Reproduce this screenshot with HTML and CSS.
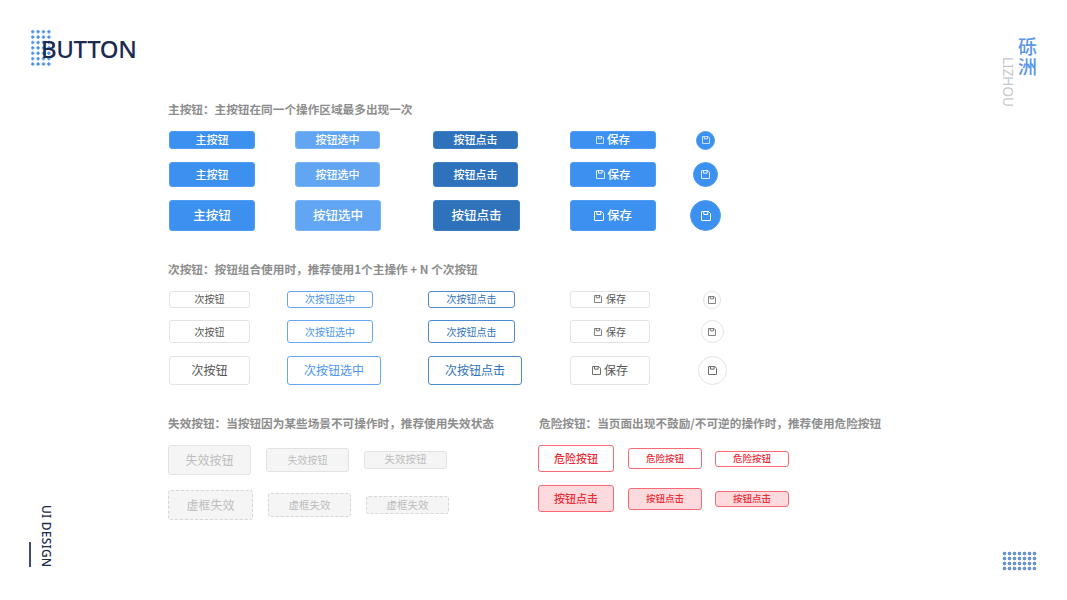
FILE: index.html
```html
<!DOCTYPE html>
<html lang="zh-CN">
<head>
<meta charset="utf-8">
<title>BUTTON</title>
<link rel="stylesheet" href="styles.css">
</head>
<body>
<svg class="defs" width="0" height="0" aria-hidden="true"><symbol id="save" viewBox="1 1 10 10"><path d="M2 1.5h6.5l2 2V10a.5.5 0 0 1-.5.5H2a.5.5 0 0 1-.5-.5V2a.5.5 0 0 1 .5-.5z" fill="none" stroke="currentColor" stroke-width="1"/><path d="M3.8 1.5v3h4v-3" fill="none" stroke="currentColor" stroke-width="1"/></symbol></svg>
<div class="page">
  <aside class="rail-left">
    <div class="logo"><span class="logo-dots"></span><span class="logo-text">BUTTON</span></div>
    <div class="tag"><span class="tag-line"></span><span class="tag-text">UI DESIGN</span></div>
  </aside>
  <main class="main">
    <h2 class="title">主按钮：主按钮在同一个操作区域最多出现一次</h2>
    <div class="grid grid-primary">
      <button class="btn pri h18 w86 f11">主按钮</button>
      <button class="btn sel h18 w85 f11">按钮选中</button>
      <button class="btn clk h18 w85 f11">按钮点击</button>
      <button class="btn pri h18 w86 f115 g3"><svg class="i8"><use href="#save"/></svg>保存</button>
      <span class="cell"><button class="btn pri round c19"><svg class="i8"><use href="#save"/></svg></button></span>

      <button class="btn pri h25 w86 f11">主按钮</button>
      <button class="btn sel h25 w85 f11">按钮选中</button>
      <button class="btn clk h25 w85 f11">按钮点击</button>
      <button class="btn pri h25 w86 f115 g3"><svg class="i9"><use href="#save"/></svg>保存</button>
      <span class="cell"><button class="btn pri round c25"><svg class="i9"><use href="#save"/></svg></button></span>

      <button class="btn pri h31 w86 f125">主按钮</button>
      <button class="btn sel h31 w86 f125">按钮选中</button>
      <button class="btn clk h31 w87 f125">按钮点击</button>
      <button class="btn pri h31 w86 f125 g3"><svg class="i10"><use href="#save"/></svg>保存</button>
      <span class="cell"><button class="btn pri round c31"><svg class="i10"><use href="#save"/></svg></button></span>
    </div>

    <h2 class="title">次按钮：按钮组合使用时，推荐使用1个主操作 + N 个次按钮</h2>
    <div class="grid grid-secondary">
      <button class="btn ghost h17 w81 f10">次按钮</button>
      <button class="btn osel h17 w86 f10">次按钮选中</button>
      <button class="btn oclk h17 w87 f10">次按钮点击</button>
      <button class="btn ghost h17 w80 f10 g4"><svg class="i8"><use href="#save"/></svg>保存</button>
      <span class="cell"><button class="btn ghost round c18"><svg class="i8"><use href="#save"/></svg></button></span>

      <button class="btn ghost h23 w81 f10">次按钮</button>
      <button class="btn osel h23 w86 f10">次按钮选中</button>
      <button class="btn oclk h23 w87 f10">次按钮点击</button>
      <button class="btn ghost h23 w80 f10 g4"><svg class="i8"><use href="#save"/></svg>保存</button>
      <span class="cell"><button class="btn ghost round c23"><svg class="i8"><use href="#save"/></svg></button></span>

      <button class="btn ghost h29 w81 f12">次按钮</button>
      <button class="btn osel h29 w94 f12">次按钮选中</button>
      <button class="btn oclk h29 w94 f12">次按钮点击</button>
      <button class="btn ghost h29 w80 f12 g3"><svg class="i9"><use href="#save"/></svg>保存</button>
      <span class="cell"><button class="btn ghost round c29"><svg class="i9"><use href="#save"/></svg></button></span>
    </div>

    <div class="split">
      <section class="col-off">
        <h2 class="title">失效按钮：当按钮因为某些场景不可操作时，推荐使用失效状态</h2>
        <div class="off-row">
          <button class="btn off h30 w83 f12">失效按钮</button>
          <button class="btn off h24 w83 f10">失效按钮</button>
          <button class="btn off h18 w83 f105">失效按钮</button>
        </div>
        <div class="off-row">
          <button class="btn off dash h30 w85 f12">虚框失效</button>
          <button class="btn off dash h24 w83 f105">虚框失效</button>
          <button class="btn off dash h18b w83 f105">虚框失效</button>
        </div>
      </section>
      <section class="col-danger">
        <h2 class="title">危险按钮：当页面出现不鼓励/不可逆的操作时，推荐使用危险按钮</h2>
        <div class="danger-grid">
          <button class="btn dan h27 w76 f11">危险按钮</button>
          <button class="btn dan h21 w74 f95">危险按钮</button>
          <button class="btn dan h16 w74 f95">危险按钮</button>
          <button class="btn dclk h27 w76 f11">按钮点击</button>
          <button class="btn dclk h22 w74 f95">按钮点击</button>
          <button class="btn dclk h16 w74 f95">按钮点击</button>
        </div>
      </section>
    </div>
  </main>
  <aside class="rail-right">
    <div class="brand"><span class="brand-en">LIZHOU</span><span class="brand-cn">砾洲</span></div>
    <span class="corner-dots"></span>
  </aside>
</div>
</body>
</html>
```

FILE: styles.css
```css
* { box-sizing: border-box; }
html, body { margin: 0; padding: 0; background: #fff; }
body { font-family: "Noto Sans CJK SC", "Noto Sans", sans-serif; overflow: hidden; }
.defs { display: block; height: 0; }

.page { display: flex; width: 1067px; height: 600px; }

/* left rail */
.rail-left { width: 168px; flex: none; display: flex; flex-direction: column; justify-content: space-between; }
.logo { position: relative; padding: 35px 0 0 41px; }
.logo-dots {
  position: absolute; left: 29.6px; top: 29px; width: 21.6px; height: 37.8px;
  background-image: radial-gradient(circle, #4a90e8 1.3px, transparent 1.8px);
  background-size: 5.4px 5.4px;
}
.logo-text { position: relative; display: block; font-family: "Noto Sans", sans-serif; font-size: 24px; line-height: 28px; font-weight: 500; letter-spacing: -0.4px; color: #1b2a4e; }
.tag { display: flex; align-items: flex-end; gap: 9px; padding: 0 0 33px 29px; }
.tag-line { width: 2px; height: 25px; background: #3d4c70; }
.tag-text { writing-mode: vertical-rl; font-family: "Noto Sans", sans-serif; font-size: 12px; line-height: 12px; letter-spacing: 0.2px; color: #1b2a4e; font-weight: 500; }

/* main */
.main { width: 780px; flex: none; padding-top: 100px; }
.title { margin: 29px 0 13px; font-size: 11.65px; line-height: 18px; font-weight: 700; color: #8d8d8d; white-space: nowrap; }
.main > .title:first-child { margin-top: 0; }

.grid { display: grid; padding-left: 1px; justify-items: start; }
.grid-primary { grid-template-columns: 126px 138px 137px 120px 31px; grid-template-rows: 18px 25px 31px; row-gap: 13px; }
.grid-secondary { grid-template-columns: 118px 141px 142px 127px 30px; grid-template-rows: 17px 24px 29px; row-gap: 12px; }
.cell { width: 100%; display: flex; justify-content: center; }

.split { display: flex; }
.col-off { width: 371px; flex: none; }
.col-danger { flex: 1; }
.off-row { display: flex; align-items: center; gap: 15px; height: 30px; }
.off-row + .off-row { margin-top: 15px; }
.danger-grid { display: grid; grid-template-columns: 90px 87px 74px; grid-template-rows: 27px 27px; row-gap: 13px; align-items: center; justify-items: start; margin-left: -1px; }

/* buttons */
.btn { display: inline-flex; align-items: center; justify-content: center; padding: 0; margin: 0; border: 1px solid transparent; border-radius: 3px; font-family: inherit; font-weight: 400; line-height: 1; white-space: nowrap; background: none; }
.round { border-radius: 50%; }
.pri { background: #3c91f0; border-color: #4f9cf2; color: #fff; font-weight: 500; }
.sel { background: #62a6f3; border-color: #78b3f5; color: #fff; font-weight: 500; }
.clk { background: #2f72bc; border-color: #3f7ec4; color: #fff; font-weight: 500; }
.ghost { background: #fff; border-color: #e3e3e3; color: #555; }
.osel { background: #fff; border-color: #66a7f3; color: #4a96f0; }
.oclk { background: #fff; border-color: #4d8bd0; color: #2f72bc; }
.off { background: #f5f5f5; border-color: #e2e2e2; color: #bdbdbd; }
.dash { border-style: dashed; border-color: #d6d6d6; }
.dan { background: #fff; border-color: #fa6a74; color: #ee2c38; font-weight: 500; }
.dclk { background: #fddadd; border-color: #fa6a74; color: #ee2c38; font-weight: 500; }

/* sizes */
.h16 { height: 16px; } .h17 { height: 17px; padding-bottom: 1px; } .h18 { height: 18px; padding-bottom: 1px; } .h18b { height: 18px; } .h21 { height: 21px; }
.h22 { height: 22px; } .h23 { height: 23px; } .h24 { height: 24px; } .h25 { height: 25px; }
.h27 { height: 27px; } .h29 { height: 29px; padding-bottom: 1px; } .h30 { height: 30px; } .h31 { height: 31px; }
.w74 { width: 74px; } .w76 { width: 76px; } .w80 { width: 80px; } .w81 { width: 81px; }
.w83 { width: 83px; } .w85 { width: 85px; } .w86 { width: 86px; } .w87 { width: 87px; } .w94 { width: 94px; }
.c18 { width: 18px; height: 18px; } .c19 { width: 19px; height: 19px; margin-top: -0.5px; } .c23 { width: 23px; height: 23px; }
.c25 { width: 25px; height: 25px; } .c29 { width: 29px; height: 29px; } .c31 { width: 31px; height: 31px; }
.f95 { font-size: 9.5px; } .f10 { font-size: 10px; } .f105 { font-size: 10.5px; } .f11 { font-size: 11px; }
.f115 { font-size: 11.5px; } .f12 { font-size: 12px; } .f125 { font-size: 12.5px; }
.g3 { gap: 3px; } .g4 { gap: 4px; }
.i8 { width: 8px; height: 8px; } .i9 { width: 9px; height: 9px; } .i10 { width: 10px; height: 10px; }

/* right rail */
.rail-right { flex: 1; display: flex; flex-direction: column; justify-content: space-between; align-items: flex-end; padding: 36px 30px 29px 0; }
.brand { display: flex; align-items: flex-start; gap: 4px; }
.brand-en { writing-mode: vertical-rl; margin-top: 21px; font-family: "Noto Sans", sans-serif; font-size: 13.5px; line-height: 13px; color: #c6c8cc; }
.brand-cn { width: 19px; font-size: 19px; line-height: 20px; font-weight: 500; color: #5a96e8; word-break: break-all; }
.corner-dots {
  display: block; width: 35px; height: 20px;
  background-image: radial-gradient(circle, #6a94d2 1.5px, transparent 2.2px);
  background-size: 5px 5px;
}
```
